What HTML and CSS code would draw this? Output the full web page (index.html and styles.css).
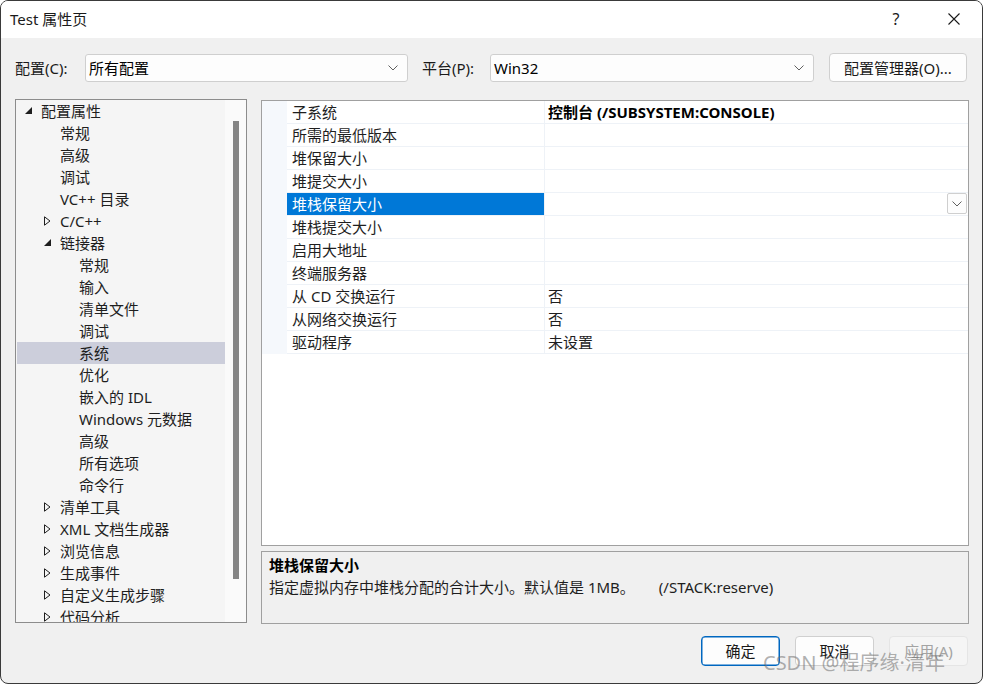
FILE: index.html
```html
<!DOCTYPE html>
<html lang="zh-CN">
<head>
<meta charset="utf-8">
<title>Test 属性页</title>
<link rel="stylesheet" href="styles.css">
</head>
<body>
<div class="window">
  <div class="titlebar">
    <span class="title">Test 属性页</span>
    <div class="caption-btns">
      <span class="cap help">?</span>
      <span class="cap close"><svg width="12" height="12" viewBox="0 0 12 12"><path d="M0.5 0.5L11.5 11.5M11.5 0.5L0.5 11.5" stroke="#1a1a1a" stroke-width="1.1" fill="none"/></svg></span>
    </div>
  </div>

  <div class="toolbar">
    <span class="tb-label l-config">配置(C):</span>
    <div class="combo c-config"><span>所有配置</span><svg class="chev" width="10" height="6" viewBox="0 0 10 6"><path d="M0.5 0.5L5 5L9.5 0.5" stroke="#606060" fill="none" stroke-width="1"/></svg></div>
    <span class="tb-label l-platform">平台(P):</span>
    <div class="combo c-platform"><span>Win32</span><svg class="chev" width="10" height="6" viewBox="0 0 10 6"><path d="M0.5 0.5L5 5L9.5 0.5" stroke="#606060" fill="none" stroke-width="1"/></svg></div>
    <button class="btn cfgmgr">配置管理器(O)...</button>
  </div>

  <div class="main">
    <div class="tree">
      <div class="tree-items">
        <div class="trow l0"><span class="twisty"><svg width="7" height="7" viewBox="0 0 7 7"><path d="M7 0V7H0Z" fill="#1e1e1e"/></svg></span><span>配置属性</span></div>
        <div class="trow l1"><span class="twisty"></span><span>常规</span></div>
        <div class="trow l1"><span class="twisty"></span><span>高级</span></div>
        <div class="trow l1"><span class="twisty"></span><span>调试</span></div>
        <div class="trow l1"><span class="twisty"></span><span>VC++ 目录</span></div>
        <div class="trow l1"><span class="twisty"><svg width="7" height="10" viewBox="0 0 7 10"><path d="M0.5 0.8L6 5L0.5 9.2Z" stroke="#1e1e1e" fill="none" stroke-width="1"/></svg></span><span>C/C++</span></div>
        <div class="trow l1"><span class="twisty"><svg width="7" height="7" viewBox="0 0 7 7"><path d="M7 0V7H0Z" fill="#1e1e1e"/></svg></span><span>链接器</span></div>
        <div class="trow l2"><span class="twisty"></span><span>常规</span></div>
        <div class="trow l2"><span class="twisty"></span><span>输入</span></div>
        <div class="trow l2"><span class="twisty"></span><span>清单文件</span></div>
        <div class="trow l2"><span class="twisty"></span><span>调试</span></div>
        <div class="trow l2 selected"><span class="twisty"></span><span>系统</span></div>
        <div class="trow l2"><span class="twisty"></span><span>优化</span></div>
        <div class="trow l2"><span class="twisty"></span><span>嵌入的 IDL</span></div>
        <div class="trow l2"><span class="twisty"></span><span>Windows 元数据</span></div>
        <div class="trow l2"><span class="twisty"></span><span>高级</span></div>
        <div class="trow l2"><span class="twisty"></span><span>所有选项</span></div>
        <div class="trow l2"><span class="twisty"></span><span>命令行</span></div>
        <div class="trow l1"><span class="twisty"><svg width="7" height="10" viewBox="0 0 7 10"><path d="M0.5 0.8L6 5L0.5 9.2Z" stroke="#1e1e1e" fill="none" stroke-width="1"/></svg></span><span>清单工具</span></div>
        <div class="trow l1"><span class="twisty"><svg width="7" height="10" viewBox="0 0 7 10"><path d="M0.5 0.8L6 5L0.5 9.2Z" stroke="#1e1e1e" fill="none" stroke-width="1"/></svg></span><span>XML 文档生成器</span></div>
        <div class="trow l1"><span class="twisty"><svg width="7" height="10" viewBox="0 0 7 10"><path d="M0.5 0.8L6 5L0.5 9.2Z" stroke="#1e1e1e" fill="none" stroke-width="1"/></svg></span><span>浏览信息</span></div>
        <div class="trow l1"><span class="twisty"><svg width="7" height="10" viewBox="0 0 7 10"><path d="M0.5 0.8L6 5L0.5 9.2Z" stroke="#1e1e1e" fill="none" stroke-width="1"/></svg></span><span>生成事件</span></div>
        <div class="trow l1"><span class="twisty"><svg width="7" height="10" viewBox="0 0 7 10"><path d="M0.5 0.8L6 5L0.5 9.2Z" stroke="#1e1e1e" fill="none" stroke-width="1"/></svg></span><span>自定义生成步骤</span></div>
        <div class="trow l1"><span class="twisty"><svg width="7" height="10" viewBox="0 0 7 10"><path d="M0.5 0.8L6 5L0.5 9.2Z" stroke="#1e1e1e" fill="none" stroke-width="1"/></svg></span><span>代码分析</span></div>
      </div>
      <div class="vscroll"><div class="thumb"></div></div>
    </div>

    <div class="right">
      <div class="grid">
        <div class="prow"><div class="pmargin"></div><div class="pname">子系统</div><div class="pval bold">控制台 (/SUBSYSTEM:CONSOLE)</div></div>
        <div class="prow"><div class="pmargin"></div><div class="pname">所需的最低版本</div><div class="pval"></div></div>
        <div class="prow"><div class="pmargin"></div><div class="pname">堆保留大小</div><div class="pval"></div></div>
        <div class="prow"><div class="pmargin"></div><div class="pname">堆提交大小</div><div class="pval"></div></div>
        <div class="prow sel"><div class="pmargin"></div><div class="pname">堆栈保留大小</div><div class="pval"><span></span><span class="dd"><svg width="10" height="6" viewBox="0 0 10 6"><path d="M0.5 0.5L5 5L9.5 0.5" stroke="#606060" fill="none" stroke-width="1"/></svg></span></div></div>
        <div class="prow"><div class="pmargin"></div><div class="pname">堆栈提交大小</div><div class="pval"></div></div>
        <div class="prow"><div class="pmargin"></div><div class="pname">启用大地址</div><div class="pval"></div></div>
        <div class="prow"><div class="pmargin"></div><div class="pname">终端服务器</div><div class="pval"></div></div>
        <div class="prow"><div class="pmargin"></div><div class="pname">从 CD 交换运行</div><div class="pval">否</div></div>
        <div class="prow"><div class="pmargin"></div><div class="pname">从网络交换运行</div><div class="pval">否</div></div>
        <div class="prow"><div class="pmargin"></div><div class="pname">驱动程序</div><div class="pval">未设置</div></div>
      </div>
      <div class="desc">
        <div class="desc-title">堆栈保留大小</div>
        <div class="desc-text">指定虚拟内存中堆栈分配的合计大小。默认值是 1MB。<span class="gap"></span>(/STACK:reserve)</div>
      </div>
    </div>
  </div>

  <div class="footer">
    <button class="btn fbtn default">确定</button>
    <button class="btn fbtn">取消</button>
    <button class="btn fbtn disabled">应用(A)</button>
  </div>

  <div class="watermark">CSDN @程序缘·清年</div>
</div>
</body>
</html>
```

FILE: styles.css
```css
html, body {
  margin: 0;
  padding: 0;
  background: #ffffff;
}

body {
  font-family: "Noto Sans", "Noto Sans CJK SC", sans-serif;
  font-size: 15px;
  color: #000;
}

.window {
  position: relative;
  width: 983px;
  height: 684px;
  box-sizing: border-box;
  border: 1px solid #3a3a3a;
  border-radius: 8px;
  background: #f0f0f0;
  overflow: hidden;
  display: flex;
  flex-direction: column;
}

/* Title bar */
.titlebar {
  height: 37px;
  flex: 0 0 37px;
  background: #ffffff;
  display: flex;
  align-items: center;
  justify-content: space-between;
  padding-left: 9px;
}

.title {
  font-size: 15px;
  line-height: 20px;
  color: #1a1a1a;
  margin-top: -1px;
}

.caption-btns {
  display: flex;
  height: 100%;
  margin-right: -1px;
}

.cap {
  width: 58px;
  height: 100%;
  display: flex;
  align-items: center;
  justify-content: center;
  color: #1a1a1a;
}

.help {
  font-size: 16px;
  line-height: 20px;
  margin-top: -1px;
}

.close svg {
  display: block;
  margin-top: -2px;
}

/* Toolbar */
.toolbar {
  display: flex;
  align-items: center;
  margin-top: 16px;
  height: 28px;
  padding-left: 14px;
}

.tb-label {
  font-size: 15px;
  line-height: 20px;
  color: #1a1a1a;
}

.l-config { width: 70px; }
.l-platform { width: 68px; margin-left: 14px; }

.combo {
  height: 28px;
  box-sizing: border-box;
  border: 1px solid #cfcfcf;
  border-radius: 3px;
  background: #fdfdfd;
  display: flex;
  align-items: center;
  justify-content: space-between;
  padding: 0 9px 0 3px;
  font-size: 15px;
}

.c-config { width: 323px; }
.c-platform { width: 324px; }

.combo span { line-height: 20px; }
.chev { display: block; }

.btn {
  font-family: "Noto Sans", "Noto Sans CJK SC", sans-serif;
  font-size: 15px;
  color: #1a1a1a;
  background: #fdfdfd;
  border: 1px solid #d0d0d0;
  border-radius: 4px;
  padding: 0;
  box-sizing: border-box;
}

.cfgmgr {
  margin-left: 15px;
  width: 138px;
  height: 29px;
  margin-top: -1px;
  line-height: 20px;
}

/* Main */
.main {
  display: flex;
  margin-top: 17px;
  height: 525px;
  padding-left: 14px;
}

.tree {
  width: 232px;
  height: 524px;
  box-sizing: border-box;
  border: 1px solid #8c8c8c;
  background: #f5f5f5;
  display: flex;
  overflow: hidden;
}

.tree-items {
  width: 209px;
  padding-left: 1px;
  box-sizing: border-box;
}

.trow {
  height: 22px;
  line-height: 22px;
  display: flex;
  align-items: center;
  white-space: nowrap;
  color: #1e1e1e;
}

.trow.l0 { padding-left: 8px; }
.trow.l1 { padding-left: 27px; }
.trow.l2 { padding-left: 46px; }

.trow.selected { background: #cccedb; }

.twisty {
  width: 16px;
  flex: 0 0 16px;
  display: flex;
  align-items: center;
}

.twisty svg { display: block; margin-top: -1px; }

.vscroll {
  width: 21px;
  background: #fafafa;
  padding-top: 21px;
  padding-left: 8px;
  box-sizing: border-box;
}

.thumb {
  width: 6px;
  height: 458px;
  background: #858585;
}

.right {
  margin-left: 14px;
  width: 708px;
  padding-top: 1px;
  display: flex;
  flex-direction: column;
  gap: 5px;
}

.grid {
  height: 446px;
  box-sizing: border-box;
  border: 1px solid #a0a0a0;
  background: #ffffff;
}

.prow {
  display: flex;
  height: 23px;
}

.pmargin {
  width: 25px;
  flex: 0 0 25px;
  background: #f5f8fc;
}

.pname {
  width: 258px;
  flex: 0 0 258px;
  box-sizing: border-box;
  padding-left: 5px;
  padding-top: 1px;
  line-height: 21px;
  border-bottom: 1px solid #eef2f7;
  border-right: 1px solid #eef2f7;
  color: #1e1e1e;
  white-space: nowrap;
}

.pval {
  flex: 1;
  box-sizing: border-box;
  padding-left: 3px;
  padding-top: 1px;
  line-height: 21px;
  border-bottom: 1px solid #eef2f7;
  display: flex;
  justify-content: space-between;
  align-items: flex-start;
  color: #1e1e1e;
  white-space: nowrap;
}

.prow.sel .pval { padding-top: 0; }

.pval.bold {
  font-weight: 700;
  color: #000;
}

.prow.sel .pname {
  background: #0078d7;
  color: #ffffff;
}

.dd {
  width: 20px;
  height: 21px;
  box-sizing: border-box;
  border: 1px solid #cfcfcf;
  border-radius: 2px;
  background: #fdfdfd;
  display: flex;
  align-items: center;
  justify-content: center;
  margin-right: 1px;
}

.dd svg { display: block; }

.desc {
  height: 73px;
  box-sizing: border-box;
  border: 1px solid #a0a0a0;
  background: #f0f0f0;
  padding: 2px 0 0 7px;
}

.desc-title {
  font-weight: 700;
  line-height: 22px;
  color: #000;
}

.desc-text {
  line-height: 22px;
  color: #1e1e1e;
  white-space: nowrap;
}

.gap {
  display: inline-block;
  width: 24px;
}

/* Footer */
.footer {
  display: flex;
  justify-content: flex-end;
  gap: 15px;
  margin-top: 12px;
  padding-right: 14px;
}

.fbtn {
  width: 79px;
  height: 30px;
  line-height: 20px;
}

.fbtn.default {
  border: 1px solid #0067c0;
  box-shadow: inset 0 0 0 0.5px #0067c0;
}

.fbtn.disabled {
  background: #f5f5f5;
  border-color: #e5e5e5;
  color: #a3a3a3;
}

.watermark {
  position: absolute;
  left: 762px;
  top: 650px;
  font-size: 20px;
  line-height: 24px;
  color: rgba(110, 110, 110, 0.55);
  white-space: nowrap;
  pointer-events: none;
}
```
